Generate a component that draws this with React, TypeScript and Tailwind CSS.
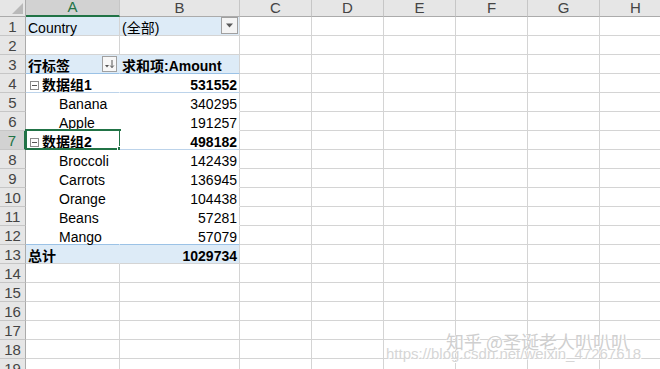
import type { ReactNode } from 'react';

const FONT = { fontFamily: '"Liberation Sans", "Noto Sans CJK SC", sans-serif' };

const COLS = ['C', 'D', 'E', 'F', 'G', 'H'];

type PivotRow = {
  a?: ReactNode;
  b?: ReactNode;
  kind?: 'filter' | 'head' | 'group' | 'item' | 'total';
};

function Minus() {
  return (
    <span className="mr-[3px] inline-flex h-[9px] w-[9px] items-center justify-center border border-[#8c8c8c] bg-white">
      <span className="h-px w-[5px] bg-[#555]" />
    </span>
  );
}

function FilterButton() {
  return (
    <span className="absolute right-[1px] top-[0px] flex h-[17px] w-[17px] items-center justify-center border border-[#a0a0a0] bg-[#f4f4f4]">
      <svg width="9" height="5" viewBox="0 0 9 5">
        <path d="M1 0.5h7L4.5 4.5z" fill="#595959" />
      </svg>
    </span>
  );
}

function SortButton() {
  return (
    <span className="absolute right-[2px] top-[1px] flex h-[16px] w-[15px] items-center justify-center border border-[#a0a0a0] bg-[#f7f7f7]">
      <svg width="11" height="10" viewBox="0 0 11 10">
        <path d="M1 6h4L3 8.5z" fill="#555" />
        <path d="M8 1v7.5M6.2 6.5L8 8.6l1.8-2.1" stroke="#555" strokeWidth="1" fill="none" />
      </svg>
    </span>
  );
}

const PIVOT: PivotRow[] = [
  { a: 'Country', b: '(全部)', kind: 'filter' },
  {},
  { a: '行标签', b: '求和项:Amount', kind: 'head' },
  { a: '数据组1', b: '531552', kind: 'group' },
  { a: 'Banana', b: '340295', kind: 'item' },
  { a: 'Apple', b: '191257', kind: 'item' },
  { a: '数据组2', b: '498182', kind: 'group' },
  { a: 'Broccoli', b: '142439', kind: 'item' },
  { a: 'Carrots', b: '136945', kind: 'item' },
  { a: 'Orange', b: '104438', kind: 'item' },
  { a: 'Beans', b: '57281', kind: 'item' },
  { a: 'Mango', b: '57079', kind: 'item' },
  { a: '总计', b: '1029734', kind: 'total' },
  {}, {}, {}, {}, {}, {},
];

function SheetRow({ n, row }: { n: number; row: PivotRow }) {
  const inPivot = n >= 3 && n <= 13;
  const blue = row.kind === 'filter' || row.kind === 'head' || row.kind === 'total';
  const bold = row.kind === 'head' || row.kind === 'group' || row.kind === 'total';
  const selected = n === 7;

  let bottom = 'border-b-[#d4d4d4]';
  if (row.kind === 'head') bottom = 'border-b-[#9bc2e6]';
  if (row.kind === 'group') bottom = 'border-b-[#bcd3ea]';
  if (n === 12) bottom = 'border-b-[#9bc2e6]';
  if (inPivot && row.kind === 'item' && n !== 12) bottom = 'border-b-transparent';

  return (
    <div className="flex h-[19px]">
      <div
        className={
          selected
            ? 'flex h-[19px] w-[26px] shrink-0 items-center justify-center border-b border-r-2 border-b-[#c6c6c6] border-r-[#217346] bg-[#d2d2d2] pt-[2px] text-[15px] text-[#217346]'
            : 'flex h-[19px] w-[26px] shrink-0 items-center justify-center border-b border-r border-b-[#c6c6c6] border-r-[#ababab] bg-[#e6e6e6] pt-[2px] text-[15px] text-[#444]'
        }
      >
        {n}
      </div>
      <div
        className={`relative flex h-[19px] w-[94px] shrink-0 items-center border-b pt-[4px] ${bottom} ${
          inPivot ? 'border-r border-r-transparent' : 'border-r border-r-[#d4d4d4]'
        } ${blue ? 'bg-[#ddebf7]' : 'bg-white'} ${bold ? 'font-bold' : ''} text-[14px] text-black ${
          row.kind === 'item' ? 'pl-[33px]' : row.kind === 'group' ? 'pl-[4px]' : 'pl-[2px]'
        }`}
      >
        {row.kind === 'group' && <Minus />}
        <span className="whitespace-nowrap">{row.a}</span>
        {row.kind === 'head' && <SortButton />}
        {selected && (
          <div className="pointer-events-none absolute -left-[1px] -top-[2px] h-[21px] w-[96px] border-2 border-[#217346]">
            <span className="absolute -bottom-[4px] -right-[4px] h-[6px] w-[6px] border border-white bg-[#217346]" />
          </div>
        )}
      </div>
      <div
        className={`relative flex h-[19px] w-[120px] shrink-0 items-center border-b border-r border-r-[#d4d4d4] pt-[4px] ${bottom} ${
          blue ? 'bg-[#ddebf7]' : 'bg-white'
        } ${bold ? 'font-bold' : ''} text-[14px] text-black ${
          row.kind === 'filter' || row.kind === 'head' ? 'justify-start pl-[2px]' : 'justify-end pr-[2px]'
        }`}
      >
        <span className="whitespace-nowrap">{row.b}</span>
        {row.kind === 'filter' && <FilterButton />}
      </div>
      {COLS.map((c) => (
        <div key={c} className="h-[19px] w-[72px] shrink-0 border-b border-r border-[#d4d4d4] bg-white" />
      ))}
    </div>
  );
}

export default function App() {
  return (
    <div className="relative h-[369px] w-[660px] overflow-hidden bg-white" style={FONT}>
      {/* column headers */}
      <div className="flex h-[17px]">
        <div className="relative h-[17px] w-[26px] shrink-0 border-b border-r border-[#ababab] bg-[#e6e6e6]">
          <svg className="absolute bottom-[2px] right-[2px]" width="11" height="11" viewBox="0 0 11 11">
            <path d="M11 0v11H0z" fill="#b9b9b9" />
          </svg>
        </div>
        <div className="flex h-[17px] w-[94px] shrink-0 items-center justify-center border-b-2 border-r border-b-[#217346] border-r-[#c6c6c6] bg-[#d2d2d2] text-[15px] text-[#217346]">
          A
        </div>
        <div className="flex h-[17px] w-[120px] shrink-0 items-center justify-center border-b border-r border-b-[#ababab] border-r-[#c6c6c6] bg-[#e6e6e6] text-[15px] text-[#444]">
          B
        </div>
        {COLS.map((c) => (
          <div
            key={c}
            className="flex h-[17px] w-[72px] shrink-0 items-center justify-center border-b border-r border-b-[#ababab] border-r-[#c6c6c6] bg-[#e6e6e6] text-[15px] text-[#444]"
          >
            {c}
          </div>
        ))}
      </div>

      {PIVOT.map((row, i) => (
        <SheetRow key={i} n={i + 1} row={row} />
      ))}

      {/* watermark */}
      <div
        className="pointer-events-none absolute left-[446px] top-[328px] whitespace-nowrap text-[18px] text-[#cfcfcf] [text-shadow:0_0_1px_#fff,1px_1px_0_#fff]"
        style={{ fontFamily: '"Noto Sans CJK SC", sans-serif' }}
      >
        知乎 @圣诞老人叭叭叭
      </div>
      <div className="pointer-events-none absolute left-[386px] top-[343px] whitespace-nowrap text-[15px] text-[#d6d6d6] [text-shadow:1px_1px_0_#fff]">
        https://blog.csdn.net/weixin_47267618
      </div>
    </div>
  );
}
